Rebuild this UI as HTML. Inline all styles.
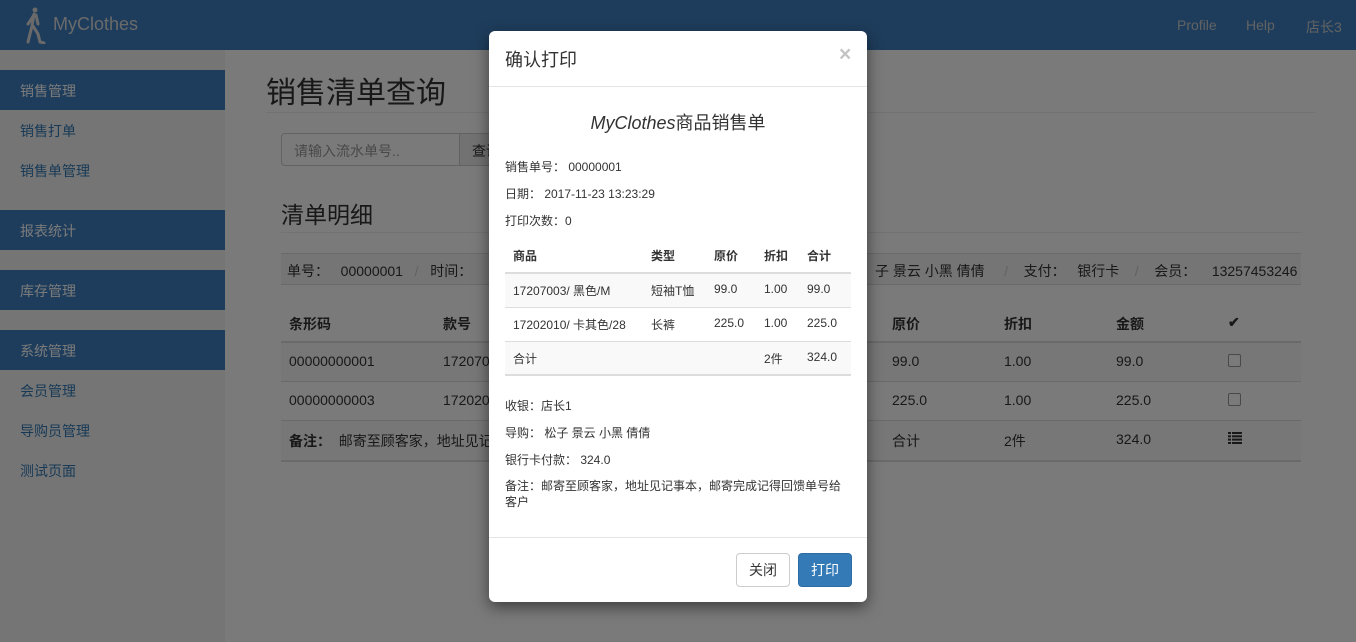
<!DOCTYPE html>
<html><head><meta charset="utf-8"><style>
*{box-sizing:border-box;margin:0;padding:0}
body{width:1356px;height:642px;overflow:hidden;position:relative;background:#fff;font-family:"Liberation Sans","Noto Sans CJK SC",sans-serif;font-size:14px;color:#333}
.nav{position:absolute;left:0;top:0;width:1356px;height:50px;background:#3f80c0}
.brand{position:absolute;left:53px;top:14px;font-size:18px;color:#ddd}
.nr{position:absolute;top:17px;font-size:14px;color:#ccc}
.side{position:absolute;left:0;top:50px;width:225px;height:592px;background:#f5f5f5}
.sh{position:absolute;left:0;width:225px;height:40px;background:#3f80c0;color:#fff;padding:11px 20px;font-size:14px}
.si{position:absolute;left:20px;color:#337ab7;font-size:14px}
.abs{position:absolute}
.th{font-weight:bold}
.row{position:absolute;left:281px;width:1020px;border-top:1px solid #ddd}
.ov{position:absolute;left:0;top:0;width:1356px;height:642px;background:rgba(0,0,0,.52)}
.modal{position:absolute;left:489px;top:31px;width:378px;height:571px;background:#fff;border-radius:6px;box-shadow:0 5px 15px rgba(0,0,0,.5);font-size:12px}
.m{position:absolute}
</style></head><body>
<div class="nav">
<svg class="abs" style="left:22px;top:6px" width="26" height="38" viewBox="0 0 26 38"><g fill="none" stroke="#ddd" stroke-width="3" stroke-linecap="round"><circle cx="13" cy="4" r="2.5" fill="#ddd" stroke="none"/><path d="M12 8 L10 20 L6 36 M11 20 L16 28 L18 36 L22 37 M12 9 L6 18 M14 9 L16 18"/></g></svg>
<div class="brand">MyClothes</div>
<div class="nr" style="left:1177px">Profile</div>
<div class="nr" style="left:1246px">Help</div>
<div class="nr" style="left:1306px">店长3</div>
</div>
<div class="side">
<div class="sh" style="top:20px">销售管理</div>
<div class="si" style="top:71px">销售打单</div>
<div class="si" style="top:111px">销售单管理</div>
<div class="sh" style="top:160px">报表统计</div>
<div class="sh" style="top:220px">库存管理</div>
<div class="sh" style="top:280px">系统管理</div>
<div class="si" style="top:331px">会员管理</div>
<div class="si" style="top:371px">导购员管理</div>
<div class="si" style="top:411px">测试页面</div>
</div>
<div class="abs" style="left:266px;top:68px;font-size:30px;color:#333">销售清单查询</div>
<div class="abs" style="left:266px;top:112px;width:1050px;border-top:1px solid #eee"></div>
<div class="abs" style="left:281px;top:133px;width:179px;height:33px;border:1px solid #ccc;border-radius:4px 0 0 4px;padding:7px 12px;color:#999">请输入流水单号..</div>
<div class="abs" style="left:459px;top:133px;width:60px;height:33px;border:1px solid #ccc;background:#eee;padding:7px 12px">查询</div>
<div class="abs" style="left:281px;top:196px;font-size:23px">清单明细</div>
<div class="abs" style="left:281px;top:232px;width:1020px;border-top:1px solid #eee"></div>
<div class="abs" style="left:281px;top:253px;width:1020px;height:32px;background:#f5f5f5;border-top:1px solid #ddd;border-bottom:1px solid #ddd;padding:7px 6px;white-space:nowrap">单号：&nbsp;&nbsp;&nbsp;00000001 <span style="color:#ccc">&nbsp;&nbsp;/&nbsp;&nbsp;</span> 时间：<span style="position:absolute;left:594px">子 景云 小黑 倩倩 <span style="color:#ccc">&nbsp;&nbsp;&nbsp;&nbsp;/&nbsp;&nbsp;&nbsp;</span> 支付：&nbsp;&nbsp;&nbsp;银行卡 <span style="color:#ccc">&nbsp;&nbsp;&nbsp;/&nbsp;&nbsp;&nbsp;</span> 会员：&nbsp;&nbsp;&nbsp;&nbsp;13257453246</span></div>
<div class="abs th" style="left:289px;top:314px">条形码</div><div class="abs th" style="left:443px;top:314px">款号</div>
<div class="abs th" style="left:892px;top:314px">原价</div><div class="abs th" style="left:1004px;top:314px">折扣</div><div class="abs th" style="left:1116px;top:314px">金额</div><div class="abs th" style="left:1228px;top:314px">✔</div>
<div class="row" style="top:341px;border-top:2px solid #ddd;height:40px;background:#f9f9f9"></div>
<div class="row" style="top:381px;height:39px"></div>
<div class="row" style="top:420px;height:42px;background:#f9f9f9;border-bottom:2px solid #ddd"></div>
<div class="abs" style="left:289px;top:353px">00000000001</div><div class="abs" style="left:443px;top:353px">17207003</div><div class="abs" style="left:892px;top:353px">99.0</div><div class="abs" style="left:1004px;top:353px">1.00</div><div class="abs" style="left:1116px;top:353px">99.0</div>
<div class="abs" style="left:289px;top:392px">00000000003</div><div class="abs" style="left:443px;top:392px">17202010</div><div class="abs" style="left:892px;top:392px">225.0</div><div class="abs" style="left:1004px;top:392px">1.00</div><div class="abs" style="left:1116px;top:392px">225.0</div>
<div class="abs" style="left:1228px;top:354px;width:13px;height:13px;border:1px solid #999;border-radius:2px;background:#fff"></div>
<div class="abs" style="left:1228px;top:393px;width:13px;height:13px;border:1px solid #999;border-radius:2px;background:#fff"></div>
<div class="abs" style="left:289px;top:431px"><b>备注：</b>&nbsp;&nbsp;邮寄至顾客家，地址见记事本</div>
<div class="abs" style="left:892px;top:431px">合计</div><div class="abs" style="left:1004px;top:431px">2件</div><div class="abs" style="left:1116px;top:431px">324.0</div>
<svg class="abs" style="left:1228px;top:432px" width="14" height="12"><g fill="#333"><rect x="0" y="0" width="3" height="2"/><rect x="4" y="0" width="10" height="2"/><rect x="0" y="3.3" width="3" height="2"/><rect x="4" y="3.3" width="10" height="2"/><rect x="0" y="6.6" width="3" height="2"/><rect x="4" y="6.6" width="10" height="2"/><rect x="0" y="10" width="3" height="2"/><rect x="4" y="10" width="10" height="2"/></g></svg>
<div class="ov"></div>
<div class="modal">
<div class="m" style="left:16px;top:15px;font-size:18px">确认打印</div>
<div class="m" style="left:350px;top:12px;font-size:21px;font-weight:bold;color:#c4c4c4">×</div>
<div class="m" style="left:0;top:55px;width:378px;border-top:1px solid #e5e5e5"></div>
<div class="m" style="left:0;top:78px;width:378px;text-align:center;font-size:18px"><i>MyClothes</i>商品销售单</div>
<div class="m" style="left:16px;top:127px">销售单号：&nbsp;00000001</div>
<div class="m" style="left:16px;top:154px">日期：&nbsp;2017-11-23 13:23:29</div>
<div class="m" style="left:16px;top:181px">打印次数：0</div>
<div class="m" style="left:16px;top:241px;width:346px;height:35px;background:#f9f9f9;border-top:2px solid #ddd"></div>
<div class="m" style="left:16px;top:276px;width:346px;border-top:1px solid #ddd"></div>
<div class="m" style="left:16px;top:310px;width:346px;height:35px;background:#f9f9f9;border-top:1px solid #ddd;border-bottom:2px solid #ddd"></div>
<div class="m th" style="left:24px;top:216px">商品</div><div class="m th" style="left:162px;top:216px">类型</div><div class="m th" style="left:225px;top:216px">原价</div><div class="m th" style="left:275px;top:216px">折扣</div><div class="m th" style="left:318px;top:216px">合计</div>
<div class="m" style="left:24px;top:251px">17207003/ 黑色/M</div><div class="m" style="left:162px;top:251px">短袖T恤</div><div class="m" style="left:225px;top:251px">99.0</div><div class="m" style="left:275px;top:251px">1.00</div><div class="m" style="left:318px;top:251px">99.0</div>
<div class="m" style="left:24px;top:285px">17202010/ 卡其色/28</div><div class="m" style="left:162px;top:285px">长裤</div><div class="m" style="left:225px;top:285px">225.0</div><div class="m" style="left:275px;top:285px">1.00</div><div class="m" style="left:318px;top:285px">225.0</div>
<div class="m" style="left:24px;top:319px">合计</div><div class="m" style="left:275px;top:319px">2件</div><div class="m" style="left:318px;top:319px">324.0</div>
<div class="m" style="left:16px;top:366px">收银：店长1</div>
<div class="m" style="left:16px;top:393px">导购：&nbsp;松子 景云 小黑 倩倩</div>
<div class="m" style="left:16px;top:420px">银行卡付款：&nbsp;324.0</div>
<div class="m" style="left:16px;top:447px;width:345px;line-height:16px">备注：邮寄至顾客家，地址见记事本，邮寄完成记得回馈单号给客户</div>
<div class="m" style="left:0;top:506px;width:378px;border-top:1px solid #e5e5e5"></div>
<div class="m" style="left:247px;top:522px;width:54px;height:34px;border:1px solid #ccc;border-radius:4px;text-align:center;line-height:32px;font-size:14px">关闭</div>
<div class="m" style="left:309px;top:522px;width:54px;height:34px;background:#337ab7;border:1px solid #2e6da4;border-radius:4px;text-align:center;line-height:32px;font-size:14px;color:#fff">打印</div>
</div>
</body></html>
